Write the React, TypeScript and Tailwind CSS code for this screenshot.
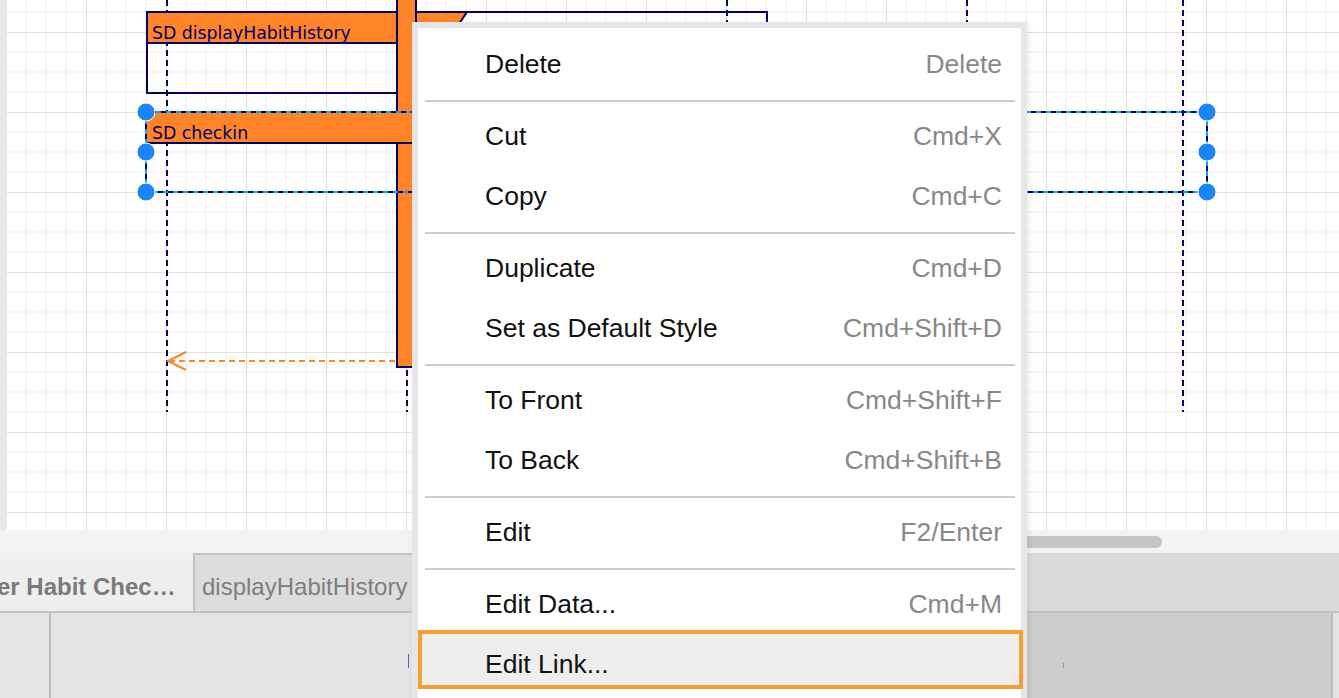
import React from 'react';

const NAVY = '#000066';
const ORANGE = '#fe8427';
const SEL = '#00a8ff';
const HANDLE = '#1a85f6';

type Entry = { label: string; keys?: string; active?: boolean } | 'sep';

const MENU: Entry[] = [
  { label: 'Delete', keys: 'Delete' },
  'sep',
  { label: 'Cut', keys: 'Cmd+X' },
  { label: 'Copy', keys: 'Cmd+C' },
  'sep',
  { label: 'Duplicate', keys: 'Cmd+D' },
  { label: 'Set as Default Style', keys: 'Cmd+Shift+D' },
  'sep',
  { label: 'To Front', keys: 'Cmd+Shift+F' },
  { label: 'To Back', keys: 'Cmd+Shift+B' },
  'sep',
  { label: 'Edit', keys: 'F2/Enter' },
  'sep',
  { label: 'Edit Data...', keys: 'Cmd+M' },
  { label: 'Edit Link...', active: true },
];

/** Канвас диаграммы: сетка, фреймы, лайфлайны, выделение. */
function DiagramCanvas() {
  const lifelines = [167, 407, 727, 967, 1183];
  const handles: [number, number][] = [
    [146, 112], [146, 152], [146, 192],
    [1207, 112], [1207, 152], [1207, 192],
  ];
  return (
    <svg width={1332} height={530} viewBox="7 0 1332 530" className="block">
      <defs>
        <pattern id="grid" x="6" y="32" width="80" height="80" patternUnits="userSpaceOnUse">
          <rect width="80" height="80" fill="#ffffff" />
          {[20, 40, 60].map((o) => (
            <g key={o} fill="#f6f6f6">
              <rect x={o - 1} y={0} width={2} height={80} />
              <rect x={0} y={o - 1} width={80} height={2} />
            </g>
          ))}
          <rect x={0} y={0} width={1} height={80} fill="#e0e0e0" />
          <rect x={0} y={0} width={80} height={1} fill="#e0e0e0" />
        </pattern>
      </defs>
      <rect x={7} y={0} width={1332} height={530} fill="url(#grid)" />

      {/* lifelines */}
      {lifelines.map((x) => (
        <line key={x} x1={x} y1={0} x2={x} y2={412} stroke={NAVY} strokeWidth={2} strokeDasharray="6 4" />
      ))}

      {/* SD displayHabitHistory */}
      <rect x={147} y={12} width={620} height={81} fill="none" stroke={NAVY} strokeWidth={2} />
      <polygon points="147,12 467,12 446,43 147,43" fill={ORANGE} stroke={NAVY} strokeWidth={2} />
      <text x={152} y={39} fill={NAVY} fontSize={17.3} fontFamily="'DejaVu Sans', Verdana, sans-serif">
        SD displayHabitHistory
      </text>

      {/* activation bar */}
      <rect x={397} y={-10} width={19} height={377} fill={ORANGE} stroke={NAVY} strokeWidth={2} />

      {/* return message */}
      <line x1={169} y1={361} x2={396} y2={361} stroke={ORANGE} strokeWidth={2} strokeDasharray="6 4" />
      <polyline points="186,352 168,361 186,370" fill="none" stroke={ORANGE} strokeWidth={2} />

      {/* SD checkin (selected) */}
      <polygon points="146,112 470,112 470,128 455,143 146,143" fill={ORANGE} stroke={NAVY} strokeWidth={2} />
      <rect x={146} y={112} width={1061} height={80} fill="none" stroke={NAVY} strokeWidth={2} />
      <text x={152} y={139} fill={NAVY} fontSize={17.3} fontFamily="'DejaVu Sans', Verdana, sans-serif">
        SD checkin
      </text>
      <rect x={146} y={112} width={1061} height={80} fill="none" stroke={SEL} strokeWidth={2} strokeDasharray="5 5" />
      {handles.map(([cx, cy]) => (
        <circle key={`${cx}-${cy}`} cx={cx} cy={cy} r={9} fill={HANDLE} stroke="#ffffff" strokeWidth={1} />
      ))}
    </svg>
  );
}

function ContextMenu() {
  return (
    <div className="absolute left-[412px] top-[22px] w-[615px] border-[6px] border-[#e6e6e6] bg-white pt-[7px] pb-[20px] font-['Liberation_Sans',Arial,sans-serif] text-[26.5px] shadow-[2px_2px_6px_rgba(0,0,0,0.08)]">
      {MENU.map((e, i) =>
        e === 'sep' ? (
          <div key={i} className="flex h-[12px] items-center pl-[7px] pr-[6px]">
            <div className="h-[2px] w-full bg-[#cdcdcd]" />
          </div>
        ) : (
          <div key={i} className="relative flex h-[60px] items-center justify-between pl-[67px] pr-[19px]">
            {e.active && (
              <div className="absolute -top-[5px] left-0 -right-[2px] h-[59px] border-4 border-[#f5a031] bg-[#eeeeee]" />
            )}
            <span className="relative text-[#111111]">{e.label}</span>
            {e.keys && <span className="relative text-[#888888]">{e.keys}</span>}
          </div>
        ),
      )}
    </div>
  );
}

export default function App() {
  return (
    <div className="relative flex h-[698px] w-[1339px] flex-col overflow-hidden bg-[#e3e3e3] font-['Liberation_Sans',Arial,sans-serif]">
      {/* canvas row */}
      <div className="flex h-[530px] shrink-0">
        <div className="w-[7px] bg-[#e8e8e8]" />
        <div className="flex-1 overflow-hidden">
          <DiagramCanvas />
        </div>
      </div>

      {/* horizontal scroll strip */}
      <div className="flex h-[23px] shrink-0 items-center bg-[#f3f3f3]">
        <div className="ml-[690px] h-[12px] w-[472px] rounded-full bg-[#c5c5c5]" />
      </div>

      {/* page tabs */}
      <div className="flex h-[60px] shrink-0 border-b-2 border-[#c2c2c2] bg-[#dadada] text-[24px]">
        <div className="flex w-[193px] items-center overflow-hidden whitespace-nowrap bg-[#eeeeee] pt-[9px] font-bold text-[#7a7a7a]">
          <span className="-ml-[3px]">er Habit Chec…</span>
        </div>
        <div className="flex w-[260px] items-center whitespace-nowrap border-l-2 border-t-2 border-[#c4c4c4] bg-[#dddddd] pl-[7px] pt-[7px] text-[#7e7e7e]">
          displayHabitHistory
        </div>
      </div>

      {/* bottom toolbar */}
      <div className="flex flex-1">
        <div className="w-[51px] border-r-2 border-[#bdbdbd] bg-[#e5e5e5]" />
        <div className="flex w-[974px] items-start bg-[#e3e3e3]">
          <div className="ml-[357px] mt-[41px] h-[14px] w-px bg-[#4a6ea8]" />
        </div>
        <div className="flex w-[308px] items-start border-r-2 border-[#bdbdbd] bg-[#cccccc]">
          <div className="ml-[38px] mt-[50px] h-[5px] w-px bg-[#8294b5]" />
        </div>
        <div className="flex-1 bg-[#e3e3e3]" />
      </div>

      <ContextMenu />
    </div>
  );
}
